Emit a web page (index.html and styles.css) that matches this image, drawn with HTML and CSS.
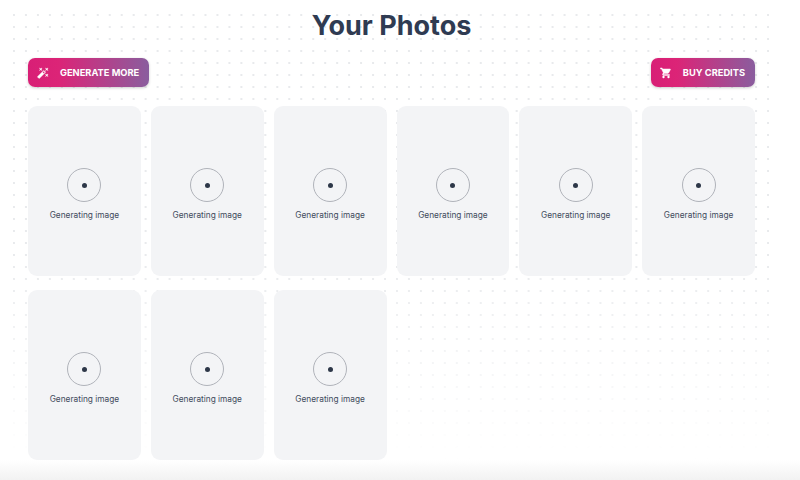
FILE: index.html
```html
<!DOCTYPE html>
<html>
  <head>
    <meta charset="utf-8">
    <title>Your Photos</title>
    <link rel="stylesheet" href="styles.css">
  </head>
  <body>
    <div class="dots"></div>
    <div class="page">
      <h1 class="title">Your Photos</h1>
      <div class="actions">
        <button class="btn">
          <svg class="btn-icon" viewBox="0 0 24 24"><path d="M7.5 5.6 10 7 8.6 4.5 10 2 7.5 3.4 5 2l1.4 2.5L5 7zm12 9.8L17 14l1.4 2.5L17 19l2.5-1.4L22 19l-1.4-2.5L22 14zM22 2l-2.5 1.4L17 2l1.4 2.5L17 7l2.5-1.4L22 7l-1.4-2.5zm-7.63 5.29a.9959.9959 0 0 0-1.41 0L1.29 18.96c-.39.39-.39 1.02 0 1.41l2.34 2.34c.39.39 1.02.39 1.41 0L16.7 11.05c.39-.39.39-1.02 0-1.41l-2.33-2.35zm-1.03 5.49-2.12-2.12 2.44-2.44 2.12 2.12-2.44 2.44z"/></svg>
          GENERATE MORE
        </button>
        <button class="btn">
          <svg class="btn-icon" viewBox="0 0 24 24"><path d="M7 18c-1.1 0-1.99.9-1.99 2S5.9 22 7 22s2-.9 2-2-.9-2-2-2zM1 2v2h2l3.6 7.59-1.35 2.45c-.16.28-.25.61-.25.96 0 1.1.9 2 2 2h12v-2H7.42c-.14 0-.25-.11-.25-.25l.03-.12.9-1.83h7.45c.75 0 1.41-.41 1.75-1.03l3.58-6.49c.08-.14.12-.31.12-.48 0-.55-.45-1-1-1H5.21l-.94-2H1zm16 16c-1.1 0-1.99.9-1.99 2s.89 2 1.99 2 2-.9 2-2-.9-2-2-2z"/></svg>
          BUY CREDITS
        </button>
      </div>
      <div class="photos">
        <div class="photo"><div class="spinner"><span class="spinner-dot"></span></div><p class="caption">Generating image</p></div>
        <div class="photo"><div class="spinner"><span class="spinner-dot"></span></div><p class="caption">Generating image</p></div>
        <div class="photo"><div class="spinner"><span class="spinner-dot"></span></div><p class="caption">Generating image</p></div>
        <div class="photo"><div class="spinner"><span class="spinner-dot"></span></div><p class="caption">Generating image</p></div>
        <div class="photo"><div class="spinner"><span class="spinner-dot"></span></div><p class="caption">Generating image</p></div>
        <div class="photo"><div class="spinner"><span class="spinner-dot"></span></div><p class="caption">Generating image</p></div>
        <div class="photo"><div class="spinner"><span class="spinner-dot"></span></div><p class="caption">Generating image</p></div>
        <div class="photo"><div class="spinner"><span class="spinner-dot"></span></div><p class="caption">Generating image</p></div>
        <div class="photo"><div class="spinner"><span class="spinner-dot"></span></div><p class="caption">Generating image</p></div>
      </div>
    </div>
    <div class="bottom-fade"></div>
  </body>
</html>
```

FILE: styles.css
```css
html, body {
  margin: 0;
  height: 480px;
  overflow: hidden;
  background-color: #fff;
}

body {
  font-family: Inter, "Liberation Sans", sans-serif;
}

/* dotted backdrop, fades out near the bottom */
.dots {
  position: absolute;
  top: 9px;
  left: 8px;
  width: 766px;
  height: 450px;
  background-image: radial-gradient(circle, #dcdfe3 0.6px, transparent 0.9px);
  background-size: 11.97px 12px;
  -webkit-mask-image: linear-gradient(to bottom, #000 55%, transparent 100%);
  mask-image: linear-gradient(to bottom, #000 55%, transparent 100%);
}

.page {
  position: relative;
  width: 727px;
  margin-left: 28px;
  display: flex;
  flex-direction: column;
}

.title {
  margin: 8px 0 0;
  height: 36px;
  line-height: 36px;
  text-align: center;
  font-size: 27px;
  font-weight: 700;
  color: #2f3b52;
}

.actions {
  display: flex;
  justify-content: space-between;
  margin-top: 14px;
}

.btn {
  display: flex;
  align-items: center;
  gap: 11px;
  height: 29px;
  padding: 0 10px 0 9px;
  border: none;
  border-radius: 7px;
  background: linear-gradient(90deg, #d81f76 0%, #dc2477 25%, #8a5d9e 100%);
  box-shadow: 0 1px 3px rgba(0,0,0,.2);
  color: #fff;
  font-family: inherit;
  font-size: 9.3px;
  font-weight: 700;
}

.btn-icon {
  width: 12px;
  height: 12px;
  fill: #fff;
  stroke: #fff;
  stroke-width: 0.8;
}

.photos {
  display: grid;
  grid-template-columns: repeat(6, 1fr);
  column-gap: 10px;
  row-gap: 14px;
  margin-top: 19px;
}

.photo {
  height: 170px;
  border-radius: 9px;
  background-color: #f3f4f6;
  display: flex;
  flex-direction: column;
  align-items: center;
  padding-top: 62px;
  box-sizing: border-box;
}

.spinner {
  width: 34px;
  height: 34px;
  box-sizing: border-box;
  border: 1px solid #b0b3ba;
  border-radius: 50%;
  display: flex;
  align-items: center;
  justify-content: center;
}

.spinner-dot {
  width: 5px;
  height: 5px;
  border-radius: 50%;
  background-color: #2d3748;
}

.caption {
  margin: 7px 0 0;
  font-size: 8.3px;
  line-height: 12px;
  color: #414b5c;
}

.bottom-fade {
  position: absolute;
  left: 0;
  right: 0;
  bottom: 0;
  height: 20px;
  background: linear-gradient(to bottom, rgba(243,243,243,0), #f2f2f2);
}
```
